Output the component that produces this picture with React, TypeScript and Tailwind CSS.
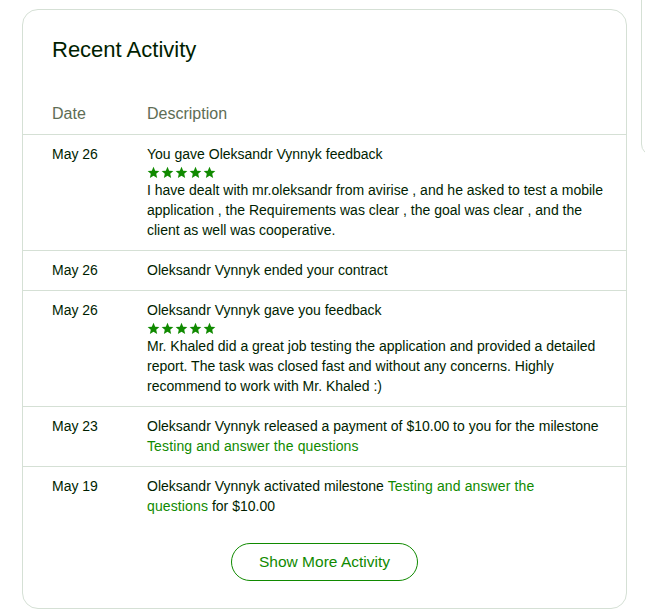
import React from "react";

const font = { fontFamily: '"Liberation Sans", Arial, sans-serif' };

const Stars = () => (
  <div className="flex items-center gap-[1px] h-[16px]">
    {[0, 1, 2, 3, 4].map((i) => (
      <svg key={i} width="13" height="13" viewBox="0 0 24 24" className="fill-[#108a00]">
        <path d="M12 1.5l3.1 7.1 7.7.7-5.8 5.1 1.7 7.6L12 18l-6.7 4 1.7-7.6L1.2 9.3l7.7-.7z" />
      </svg>
    ))}
  </div>
);

const Link = ({ children }: { children: React.ReactNode }) => (
  <span className="text-[#108a00] tracking-[0.12px]">{children}</span>
);

const rows: { date: string; body: React.ReactNode }[] = [
  {
    date: "May 26",
    body: (
      <>
        <div>You gave Oleksandr Vynnyk feedback</div>
        <Stars />
        <div>I have dealt with mr.oleksandr from avirise , and he asked to test a mobile</div>
        <div>application , the Requirements was clear , the goal was clear , and the</div>
        <div>client as well was cooperative.</div>
      </>
    ),
  },
  { date: "May 26", body: <div>Oleksandr Vynnyk ended your contract</div> },
  {
    date: "May 26",
    body: (
      <>
        <div>Oleksandr Vynnyk gave you feedback</div>
        <Stars />
        <div>Mr. Khaled did a great job testing the application and provided a detailed</div>
        <div>report. The task was closed fast and without any concerns. Highly</div>
        <div>recommend to work with Mr. Khaled :)</div>
      </>
    ),
  },
  {
    date: "May 23",
    body: (
      <>
        <div>Oleksandr Vynnyk released a payment of $10.00 to you for the milestone</div>
        <div>
          <Link>Testing and answer the questions</Link>
        </div>
      </>
    ),
  },
  {
    date: "May 19",
    body: (
      <>
        <div>
          Oleksandr Vynnyk activated milestone <Link>Testing and answer the</Link>
        </div>
        <div>
          <Link>questions</Link> for $10.00
        </div>
      </>
    ),
  },
];

export default function App() {
  return (
    <div className="w-[645px] h-[611px] overflow-hidden bg-white flex items-start" style={font}>
      <div className="ml-[22px] mt-[9px] w-[605px] h-[600px] shrink-0 border border-[#d5e0d5] rounded-[16px] flex flex-col">
        <h2 className="px-[29px] pt-[26px] text-[22px] leading-[28px] font-medium text-[#001e00]">
          Recent Activity
        </h2>
        <div className="mt-[40px] flex px-[29px] pb-[10px] text-[16px] leading-[20px] text-[#5e6d55] border-b border-[#d5e0d5]">
          <div className="w-[95px]">Date</div>
          <div>Description</div>
        </div>
        {rows.map((r, i) => (
          <div
            key={i}
            className={
              "flex pl-[29px] pr-[16px] pt-[9px] pb-[10px] text-[14px] leading-[20px] text-[#001e00] whitespace-nowrap " +
              (i < rows.length - 1 ? "border-b border-[#d5e0d5]" : "")
            }
          >
            <div className="w-[95px] shrink-0">{r.date}</div>
            <div className="flex-1 min-w-0">{r.body}</div>
          </div>
        ))}
        <div className="flex justify-center mt-[17px]">
          <button className="w-[187px] h-[38px] rounded-full border-[1.5px] border-[#108a00] text-[#108a00] text-[15.5px] font-medium">
            Show More Activity
          </button>
        </div>
      </div>
      <div className="ml-[14px] -mt-[20px] w-[200px] h-[176px] shrink-0 border border-[#d5e0d5] rounded-[12px]" />
    </div>
  );
}
